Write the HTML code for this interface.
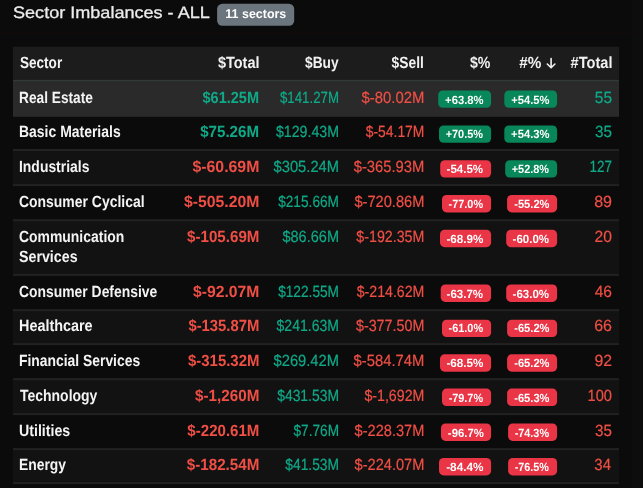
<!DOCTYPE html>
<html><head><meta charset="utf-8"><title>Sector Imbalances</title>
<style>
html,body{margin:0;padding:0;background:#0b0b0b;}
body{width:643px;height:488px;overflow:hidden;position:relative;font-family:"Liberation Sans",sans-serif;color:#f2f2f2;text-rendering:geometricPrecision;}
.bg{position:absolute;left:0;top:0;}
.txt{position:absolute;left:0;top:0;width:643px;height:488px;will-change:transform;}
.title{position:absolute;left:12.62px;top:2px;font-size:16.5px;line-height:22px;color:#ececec;white-space:nowrap;-webkit-text-stroke:0.3px #ececec;}
.cnt{position:absolute;left:217.08px;top:4px;width:77px;height:21.5px;color:#fff;font-weight:bold;font-size:12.6px;line-height:21.5px;text-align:center;white-space:nowrap}
.c{position:absolute;white-space:nowrap;font-size:16.2px;line-height:21px;height:21px;}
.c.s{font-weight:bold;color:#f4f4f4;}
.t{display:inline-block;}
.L .t{transform-origin:0 50%;} .R .t{transform-origin:100% 50%;} .C .t{transform-origin:50% 50%;}
.g{color:#0eaa88;} .r_{color:#f04f45;}
.b{font-weight:bold;}
.n{font-size:16.2px;-webkit-text-stroke:0.2px currentColor;}
.n.b{-webkit-text-stroke:0;}
.h{font-size:16.2px;}
.bd{position:absolute;height:17px;color:#fff;font-weight:bold;font-size:11.9px;line-height:17px;text-align:center;white-space:nowrap}
</style></head><body>

<svg class="bg" width="643" height="488" viewBox="0 0 643 488">
<rect x="0" y="32.6" width="632.5" height="1" fill="#140d0c"/>
<rect x="632" y="0" width="11" height="488" fill="#0d0d0d"/>
<rect x="217.1" y="3.7" width="77.1" height="22.0" rx="5.2" fill="#6b757d"/>
<rect x="13" y="46.7" width="606" height="33.2" fill="#1c1c1c"/>
<rect x="13" y="79.8" width="606" height="2" fill="#323a39"/>
<rect x="13" y="81.8" width="606" height="35" fill="#2a2a2a"/>
<rect x="13" y="150.50" width="606" height="34.10" fill="#121212"/>
<rect x="13" y="220.70" width="606" height="53.70" fill="#121212"/>
<rect x="13" y="310.70" width="606" height="32.90" fill="#121212"/>
<rect x="13" y="379.70" width="606" height="33.90" fill="#121212"/>
<rect x="13" y="449.60" width="606" height="33.00" fill="#121212"/>
<rect x="13" y="149.00" width="606" height="2" fill="#222222"/>
<rect x="13" y="184.10" width="606" height="2" fill="#222222"/>
<rect x="13" y="219.20" width="606" height="2" fill="#222222"/>
<rect x="13" y="273.90" width="606" height="2" fill="#222222"/>
<rect x="13" y="309.20" width="606" height="2" fill="#222222"/>
<rect x="13" y="343.10" width="606" height="2" fill="#222222"/>
<rect x="13" y="378.20" width="606" height="2" fill="#222222"/>
<rect x="13" y="413.10" width="606" height="2" fill="#222222"/>
<rect x="13" y="448.10" width="606" height="2" fill="#222222"/>
<rect x="13" y="482.10" width="606" height="2" fill="#222222"/>
<path d="M551.1 58.5 V67.6 M547.3 64.0 L551.1 67.8 L554.9 64.0" fill="none" stroke="#f2f2f2" stroke-width="1.6" stroke-linecap="round" stroke-linejoin="round"/>
<rect x="438.2" y="90.40" width="52.9" height="17.4" rx="4.6" fill="#08875a"/>
<rect x="504.3" y="90.40" width="52.8" height="17.4" rx="4.6" fill="#08875a"/>
<rect x="439.0" y="125.40" width="52.1" height="17.4" rx="4.6" fill="#08875a"/>
<rect x="504.3" y="125.40" width="52.8" height="17.4" rx="4.6" fill="#08875a"/>
<rect x="440.2" y="160.20" width="50.9" height="17.4" rx="4.6" fill="#e93546"/>
<rect x="505.2" y="160.20" width="51.9" height="17.4" rx="4.6" fill="#08875a"/>
<rect x="442.0" y="195.00" width="49.1" height="17.4" rx="4.6" fill="#e93546"/>
<rect x="507.1" y="195.00" width="50.0" height="17.4" rx="4.6" fill="#e93546"/>
<rect x="440.0" y="229.80" width="51.1" height="17.4" rx="4.6" fill="#e93546"/>
<rect x="506.2" y="229.80" width="50.9" height="17.4" rx="4.6" fill="#e93546"/>
<rect x="440.7" y="284.50" width="50.4" height="17.4" rx="4.6" fill="#e93546"/>
<rect x="506.2" y="284.50" width="50.9" height="17.4" rx="4.6" fill="#e93546"/>
<rect x="442.0" y="319.70" width="49.1" height="17.4" rx="4.6" fill="#e93546"/>
<rect x="507.1" y="319.70" width="50.0" height="17.4" rx="4.6" fill="#e93546"/>
<rect x="440.0" y="354.30" width="51.1" height="17.4" rx="4.6" fill="#e93546"/>
<rect x="507.1" y="354.30" width="50.0" height="17.4" rx="4.6" fill="#e93546"/>
<rect x="442.0" y="388.60" width="49.1" height="17.4" rx="4.6" fill="#e93546"/>
<rect x="507.1" y="388.60" width="50.0" height="17.4" rx="4.6" fill="#e93546"/>
<rect x="441.0" y="423.50" width="50.1" height="17.4" rx="4.6" fill="#e93546"/>
<rect x="508.1" y="423.50" width="49.0" height="17.4" rx="4.6" fill="#e93546"/>
<rect x="439.0" y="458.00" width="52.1" height="17.4" rx="4.6" fill="#e93546"/>
<rect x="508.1" y="458.00" width="49.0" height="17.4" rx="4.6" fill="#e93546"/>
</svg>
<div class="txt">
<div class="title L"><span class="t" id="title" style="transform:scaleX(1.0948)">Sector Imbalances - ALL</span></div><div class="cnt C"><span class="t" id="cnt" style="transform:scaleX(0.9885)">11 sectors</span></div>
<div class="c L s h" style="left:19.76px;top:53px"><span class="t" id="h0" style="transform:scaleX(0.8369)">Sector</span></div>
<div class="c R b h" style="right:383.77px;top:53px"><span class="t" id="h1" style="transform:scaleX(0.8946)">$Total</span></div>
<div class="c R b h" style="right:304.68px;top:53px"><span class="t" id="h2" style="transform:scaleX(0.8489)">$Buy</span></div>
<div class="c R b h" style="right:219.41px;top:53px"><span class="t" id="h3" style="transform:scaleX(0.8518)">$Sell</span></div>
<div class="c R b h" style="right:152.90px;top:53px"><span class="t" id="h4" style="transform:scaleX(0.873)">$%</span></div>
<div class="c R b h" style="right:102.05px;top:53px"><span class="t" id="h5" style="transform:scaleX(0.9441)">#%</span></div>
<div class="c R b h" style="right:31.00px;top:53px"><span class="t" id="h6" style="transform:scaleX(0.9015)">#Total</span></div>
<div class="c L s" style="left:18.62px;top:88px"><span class="t" id="n0_0" style="transform:scaleX(0.8469)">Real Estate</span></div>
<div class="c R n b g" style="right:384.39px;top:88px"><span class="t" id="t0" style="transform:scaleX(0.8962)">$61.25M</span></div>
<div class="c R n g" style="right:304.35px;top:88px"><span class="t" id="u0" style="transform:scaleX(0.8203)">$141.27M</span></div>
<div class="c R n r_" style="right:218.85px;top:88px"><span class="t" id="s0" style="transform:scaleX(0.9194)">$-80.02M</span></div>
<div class="bd C" style="left:437.42px;width:52.9px;top:92px"><span class="t" id="p0" style="transform:scaleX(0.9456)">+63.8%</span></div>
<div class="bd C" style="left:503.52px;width:52.8px;top:92px"><span class="t" id="q0" style="transform:scaleX(0.938)">+54.5%</span></div>
<div class="c R n g" style="right:31.20px;top:88px"><span class="t" id="c0" style="transform:scaleX(0.9535)">55</span></div>
<div class="c L s" style="left:18.68px;top:122px"><span class="t" id="n1_0" style="transform:scaleX(0.8623)">Basic Materials</span></div>
<div class="c R n b g" style="right:384.32px;top:122px"><span class="t" id="t1" style="transform:scaleX(0.9341)">$75.26M</span></div>
<div class="c R n g" style="right:304.32px;top:122px"><span class="t" id="u1" style="transform:scaleX(0.8763)">$129.43M</span></div>
<div class="c R n r_" style="right:218.90px;top:122px"><span class="t" id="s1" style="transform:scaleX(0.8575)">$-54.17M</span></div>
<div class="bd C" style="left:437.88px;width:52.1px;top:126px"><span class="t" id="p1" style="transform:scaleX(0.9186)">+70.5%</span></div>
<div class="bd C" style="left:503.69px;width:52.8px;top:126px"><span class="t" id="q1" style="transform:scaleX(0.9447)">+54.3%</span></div>
<div class="c R n g" style="right:31.23px;top:122px"><span class="t" id="c1" style="transform:scaleX(0.9388)">35</span></div>
<div class="c L s" style="left:18.57px;top:157px"><span class="t" id="n2_0" style="transform:scaleX(0.86)">Industrials</span></div>
<div class="c R n b r_" style="right:384.10px;top:157px"><span class="t" id="t2" style="transform:scaleX(0.9789)">$-60.69M</span></div>
<div class="c R n g" style="right:304.48px;top:157px"><span class="t" id="u2" style="transform:scaleX(0.9088)">$305.24M</span></div>
<div class="c R n r_" style="right:218.91px;top:157px"><span class="t" id="s2" style="transform:scaleX(0.9136)">$-365.93M</span></div>
<div class="bd C" style="left:438.99px;width:50.9px;top:161px"><span class="t" id="p2" style="transform:scaleX(0.9685)">-54.5%</span></div>
<div class="bd C" style="left:504.03px;width:51.9px;top:161px"><span class="t" id="q2" style="transform:scaleX(0.915)">+52.8%</span></div>
<div class="c R n g" style="right:31.31px;top:157px"><span class="t" id="c2" style="transform:scaleX(0.8324)">127</span></div>
<div class="c L s" style="left:18.79px;top:192px"><span class="t" id="n3_0" style="transform:scaleX(0.8613)">Consumer Cyclical</span></div>
<div class="c R n b r_" style="right:384.03px;top:192px"><span class="t" id="t3" style="transform:scaleX(0.9748)">$-505.20M</span></div>
<div class="c R n g" style="right:304.41px;top:192px"><span class="t" id="u3" style="transform:scaleX(0.8454)">$215.66M</span></div>
<div class="c R n r_" style="right:218.92px;top:192px"><span class="t" id="s3" style="transform:scaleX(0.9047)">$-720.86M</span></div>
<div class="bd C" style="left:440.95px;width:49.1px;top:196px"><span class="t" id="p3" style="transform:scaleX(0.9142)">-77.0%</span></div>
<div class="bd C" style="left:506.41px;width:50.0px;top:196px"><span class="t" id="q3" style="transform:scaleX(0.9338)">-55.2%</span></div>
<div class="c R n r_" style="right:31.44px;top:192px"><span class="t" id="c3" style="transform:scaleX(0.9921)">89</span></div>
<div class="c L s" style="left:18.68px;top:227px"><span class="t" id="n4_0" style="transform:scaleX(0.8607)">Communication</span></div>
<div class="c L s" style="left:18.72px;top:247px"><span class="t" id="n4_1" style="transform:scaleX(0.8792)">Services</span></div>
<div class="c R n b r_" style="right:384.07px;top:227px"><span class="t" id="t4" style="transform:scaleX(0.934)">$-105.69M</span></div>
<div class="c R n g" style="right:304.40px;top:227px"><span class="t" id="u4" style="transform:scaleX(0.898)">$86.66M</span></div>
<div class="c R n r_" style="right:218.85px;top:227px"><span class="t" id="s4" style="transform:scaleX(0.8796)">$-192.35M</span></div>
<div class="bd C" style="left:439.06px;width:51.1px;top:231px"><span class="t" id="p4" style="transform:scaleX(0.9795)">-68.9%</span></div>
<div class="bd C" style="left:504.99px;width:50.9px;top:231px"><span class="t" id="q4" style="transform:scaleX(0.9685)">-60.0%</span></div>
<div class="c R n r_" style="right:31.29px;top:227px"><span class="t" id="c4" style="transform:scaleX(0.9688)">20</span></div>
<div class="c L s" style="left:18.68px;top:282px"><span class="t" id="n5_0" style="transform:scaleX(0.8586)">Consumer Defensive</span></div>
<div class="c R n b r_" style="right:383.90px;top:282px"><span class="t" id="t5" style="transform:scaleX(0.9694)">$-92.07M</span></div>
<div class="c R n g" style="right:304.41px;top:282px"><span class="t" id="u5" style="transform:scaleX(0.8454)">$122.55M</span></div>
<div class="c R n r_" style="right:219.06px;top:282px"><span class="t" id="s5" style="transform:scaleX(0.8747)">$-214.62M</span></div>
<div class="bd C" style="left:439.34px;width:50.4px;top:286px"><span class="t" id="p5" style="transform:scaleX(0.9706)">-63.7%</span></div>
<div class="bd C" style="left:504.99px;width:50.9px;top:286px"><span class="t" id="q5" style="transform:scaleX(0.9685)">-63.0%</span></div>
<div class="c R n r_" style="right:31.42px;top:282px"><span class="t" id="c5" style="transform:scaleX(0.963)">46</span></div>
<div class="c L s" style="left:18.68px;top:316px"><span class="t" id="n6_0" style="transform:scaleX(0.8894)">Healthcare</span></div>
<div class="c R n b r_" style="right:384.00px;top:316px"><span class="t" id="t6" style="transform:scaleX(0.9176)">$-135.87M</span></div>
<div class="c R n g" style="right:304.44px;top:316px"><span class="t" id="u6" style="transform:scaleX(0.8672)">$241.63M</span></div>
<div class="c R n r_" style="right:219.02px;top:316px"><span class="t" id="s6" style="transform:scaleX(0.8848)">$-377.50M</span></div>
<div class="bd C" style="left:440.95px;width:49.1px;top:320px"><span class="t" id="p6" style="transform:scaleX(0.9142)">-61.0%</span></div>
<div class="bd C" style="left:506.41px;width:50.0px;top:320px"><span class="t" id="q6" style="transform:scaleX(0.9338)">-65.2%</span></div>
<div class="c R n r_" style="right:31.33px;top:316px"><span class="t" id="c6" style="transform:scaleX(0.9905)">66</span></div>
<div class="c L s" style="left:18.64px;top:351px"><span class="t" id="n7_0" style="transform:scaleX(0.8574)">Financial Services</span></div>
<div class="c R n b r_" style="right:384.05px;top:351px"><span class="t" id="t7" style="transform:scaleX(0.9226)">$-315.32M</span></div>
<div class="c R n g" style="right:304.49px;top:351px"><span class="t" id="u7" style="transform:scaleX(0.9097)">$269.42M</span></div>
<div class="c R n r_" style="right:218.93px;top:351px"><span class="t" id="s7" style="transform:scaleX(0.9146)">$-584.74M</span></div>
<div class="bd C" style="left:439.06px;width:51.1px;top:355px"><span class="t" id="p7" style="transform:scaleX(0.9795)">-68.5%</span></div>
<div class="bd C" style="left:506.41px;width:50.0px;top:355px"><span class="t" id="q7" style="transform:scaleX(0.9338)">-65.2%</span></div>
<div class="c R n r_" style="right:31.47px;top:351px"><span class="t" id="c7" style="transform:scaleX(0.9783)">92</span></div>
<div class="c L s" style="left:19.77px;top:386px"><span class="t" id="n8_0" style="transform:scaleX(0.863)">Technology</span></div>
<div class="c R n b r_" style="right:383.90px;top:386px"><span class="t" id="t8" style="transform:scaleX(0.9408)">$-1,260M</span></div>
<div class="c R n g" style="right:304.40px;top:386px"><span class="t" id="u8" style="transform:scaleX(0.8587)">$431.53M</span></div>
<div class="c R n r_" style="right:219.05px;top:386px"><span class="t" id="s8" style="transform:scaleX(0.8772)">$-1,692M</span></div>
<div class="bd C" style="left:440.95px;width:49.1px;top:390px"><span class="t" id="p8" style="transform:scaleX(0.9134)">-79.7%</span></div>
<div class="bd C" style="left:506.41px;width:50.0px;top:390px"><span class="t" id="q8" style="transform:scaleX(0.9338)">-65.3%</span></div>
<div class="c R n r_" style="right:31.21px;top:386px"><span class="t" id="c8" style="transform:scaleX(0.9055)">100</span></div>
<div class="c L s" style="left:18.50px;top:421px"><span class="t" id="n9_0" style="transform:scaleX(0.8769)">Utilities</span></div>
<div class="c R n b r_" style="right:383.89px;top:421px"><span class="t" id="t9" style="transform:scaleX(0.9307)">$-220.61M</span></div>
<div class="c R n g" style="right:304.40px;top:421px"><span class="t" id="u9" style="transform:scaleX(0.8429)">$7.76M</span></div>
<div class="c R n r_" style="right:218.94px;top:421px"><span class="t" id="s9" style="transform:scaleX(0.9017)">$-228.37M</span></div>
<div class="bd C" style="left:440.30px;width:50.1px;top:425px"><span class="t" id="p9" style="transform:scaleX(0.9549)">-96.7%</span></div>
<div class="bd C" style="left:507.05px;width:49.0px;top:425px"><span class="t" id="q9" style="transform:scaleX(0.9131)">-74.3%</span></div>
<div class="c R n r_" style="right:31.22px;top:421px"><span class="t" id="c9" style="transform:scaleX(0.9389)">35</span></div>
<div class="c L s" style="left:18.62px;top:455px"><span class="t" id="n10_0" style="transform:scaleX(0.8563)">Energy</span></div>
<div class="c R n b r_" style="right:384.03px;top:455px"><span class="t" id="t10" style="transform:scaleX(0.9389)">$-182.54M</span></div>
<div class="c R n g" style="right:304.48px;top:455px"><span class="t" id="u10" style="transform:scaleX(0.8524)">$41.53M</span></div>
<div class="c R n r_" style="right:218.97px;top:455px"><span class="t" id="s10" style="transform:scaleX(0.902)">$-224.07M</span></div>
<div class="bd C" style="left:438.45px;width:52.1px;top:459px"><span class="t" id="p10" style="transform:scaleX(0.9909)">-84.4%</span></div>
<div class="bd C" style="left:506.90px;width:49.0px;top:459px"><span class="t" id="q10" style="transform:scaleX(0.9089)">-76.5%</span></div>
<div class="c R n r_" style="right:32.25px;top:455px"><span class="t" id="c10" style="transform:scaleX(0.9241)">34</span></div>
</div>
</body></html>
